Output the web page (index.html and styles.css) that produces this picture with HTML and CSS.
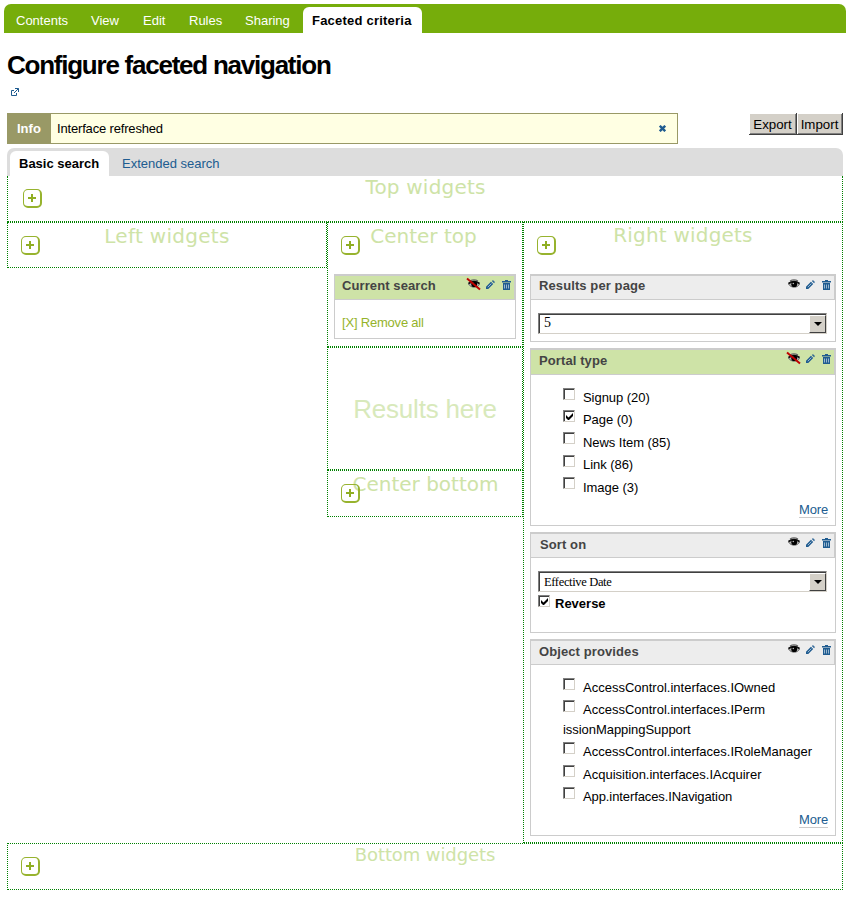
FILE: index.html
```html
<!DOCTYPE html>
<html lang="en">
<head>
<meta charset="utf-8">
<title>Configure faceted navigation</title>
<link rel="stylesheet" href="styles.css">
</head>
<body>
<svg class="defs" width="0" height="0">
  <symbol id="eye" viewBox="0 0 12 10">
    <path d="M.5 5C2 1.500 10 1.500 11.500 5C10 9 3 9.500 .5 5z" fill="#bbb" stroke="#666"/>
    <path d="M2 2Q6 -.2 10 2" fill="none" stroke="#666" stroke-width="1.200"/>
    <path d="M.5 4.500Q6 .8 11.500 4.500" fill="none" stroke="#111" stroke-width="1.600"/>
    <circle cx="6.200" cy="5.200" r="2.900" fill="#000"/><circle cx="5.300" cy="4.500" r=".8" fill="#bbb"/>
  </symbol>
  <symbol id="pencil" viewBox="0 0 10 10">
    <path d="M0 10V7.500L5.500 2L8 4.500L2.500 10zM6.500 1L8 0L8.500 1.500L10 2L9 3.500z" fill="#205c90"/>
    <path d="M2 8L6 4" stroke="#b9cee0" stroke-width=".9"/>
  </symbol>
  <symbol id="trash" viewBox="0 0 9 10">
    <path d="M3 0H6V1H9V2.500H0V1H3zM1 3H8V10H1z" fill="#205c90"/>
    <path d="M2.500 4.500V8.500M4.500 4.500V8.500M6.500 4.500V8.500" stroke="#b9cee0" stroke-width=".8"/>
  </symbol>
</svg>
<nav class="tabs">
  <a>Contents</a><a>View</a><a>Edit</a><a>Rules</a><a>Sharing</a><a class="selected">Faceted criteria</a>
</nav>
<main>
  <h1>Configure faceted navigation</h1>
  <svg class="external" viewBox="0 0 8 8" width="8" height="8"><path d="M3 2.500H.5V7.500H5.500V5M4 .5H7.500V4M7.500 .5L3 5" fill="none" stroke="#205c90"/></svg>
  <div class="status-row">
    <div class="message"><b>Info</b><span>Interface refreshed</span>
      <svg class="close" viewBox="0 0 7 7" width="7" height="7"><path d="M.8 .8L6.200 6.200M6.200 .8L.8 6.200" stroke="#205c90" stroke-width="2.400"/></svg>
    </div>
    <div class="buttons"><button class="export">Export</button><button>Import</button></div>
  </div>
  <div class="formtabs"><a class="selected">Basic search</a><a>Extended search</a></div>
  <section class="zone top"><i class="add"></i><h2>Top widgets</h2></section>
  <div class="columns">
    <section class="zone left"><i class="add"></i><h2>Left widgets</h2></section>
    <div class="center">
      <section class="zone center-top"><i class="add"></i><h2>Center top</h2>
        <article class="widget current">
          <header class="hidden-widget"><h3>Current search</h3><div class="icons"><span class="eye off"><svg><use href="#eye"/></svg></span><svg class="pencil"><use href="#pencil"/></svg><svg class="trash"><use href="#trash"/></svg></div></header>
          <a class="remove">[X] Remove all</a>
        </article>
      </section>
      <section class="zone results">Results here</section>
      <section class="zone center-bottom"><i class="add"></i><h2>Center bottom</h2></section>
    </div>
    <section class="zone right"><i class="add"></i><h2>Right widgets</h2>
      <article class="widget per-page">
        <header><h3>Results per page</h3><div class="icons"><span class="eye"><svg><use href="#eye"/></svg></span><svg class="pencil"><use href="#pencil"/></svg><svg class="trash"><use href="#trash"/></svg></div></header>
        <div class="select"><span class="five">5</span><i></i></div>
      </article>
      <article class="widget portal">
        <header class="hidden-widget"><h3>Portal type</h3><div class="icons"><span class="eye off"><svg><use href="#eye"/></svg></span><svg class="pencil"><use href="#pencil"/></svg><svg class="trash"><use href="#trash"/></svg></div></header>
        <ul>
          <li><i class="check"></i><span>Signup (20)</span></li>
          <li><i class="check"><svg viewBox="0 0 7 7"><path d="M0 2V5L2 7H3L7 3V0L2.500 4.500z"/></svg></i><span>Page (0)</span></li>
          <li><i class="check"></i><span>News Item (85)</span></li>
          <li><i class="check"></i><span>Link (86)</span></li>
          <li><i class="check"></i><span>Image (3)</span></li>
        </ul>
        <a class="more">More</a>
      </article>
      <article class="widget sort">
        <header><h3>Sort on</h3><div class="icons"><span class="eye"><svg><use href="#eye"/></svg></span><svg class="pencil"><use href="#pencil"/></svg><svg class="trash"><use href="#trash"/></svg></div></header>
        <div class="select"><span>Effective Date</span><i></i></div>
        <div class="reverse"><i class="check"><svg viewBox="0 0 7 7"><path d="M0 2V5L2 7H3L7 3V0L2.500 4.500z"/></svg></i><b>Reverse</b></div>
      </article>
      <article class="widget provides">
        <header><h3>Object provides</h3><div class="icons"><span class="eye"><svg><use href="#eye"/></svg></span><svg class="pencil"><use href="#pencil"/></svg><svg class="trash"><use href="#trash"/></svg></div></header>
        <ul>
          <li><i class="check"></i><span>AccessControl.interfaces.IOwned</span></li>
          <li class="wrapped"><i class="check"></i><span>AccessControl.interfaces.IPerm</span><span class="rest">issionMappingSupport</span></li>
          <li><i class="check"></i><span>AccessControl.interfaces.IRoleManager</span></li>
          <li><i class="check"></i><span>Acquisition.interfaces.IAcquirer</span></li>
          <li><i class="check"></i><span class="tight">App.interfaces.INavigation</span></li>
        </ul>
        <a class="more">More</a>
      </article>
    </section>
  </div>
  <section class="zone bottom"><i class="add"></i><h2>Bottom widgets</h2></section>
</main>
</body>
</html>
```
FILE: styles.css
```css
* { box-sizing: border-box; }
body { margin: 0; background: #fff; color: #000; font: 13px/18px "Liberation Sans", Arial, sans-serif; }
svg { display: block; }
.defs { position: absolute; }
h1, h2, h3, ul { margin: 0; padding: 0; font-weight: normal; }

.tabs { display: flex; align-items: flex-end; height: 29px; margin: 4px 4px 0; background: #76ad0b; border-radius: 7px 7px 0 0; color: #fff; white-space: nowrap; }
.tabs a { height: 26px; line-height: 27px; }
.tabs a:nth-child(1) { padding-left: 12px; width: 87px; }
.tabs a:nth-child(2) { width: 52px; }
.tabs a:nth-child(3) { width: 46px; }
.tabs a:nth-child(4) { width: 56px; }
.tabs a:nth-child(5) { width: 58px; }
.tabs .selected { width: 119px; padding-left: 9px; background: #fff; color: #000; font-weight: bold; letter-spacing: .22px; border-radius: 6px 6px 0 0; }

main { width: 836px; margin-left: 7px; }
h1 { height: 55px; padding-top: 17px; font-size: 26px; line-height: 30px; font-weight: bold; letter-spacing: -1.24px; white-space: nowrap; }
.external { margin-left: 4px; }
.status-row { display: flex; justify-content: space-between; margin-top: 17px; height: 35px; }
.message { display: flex; width: 671px; height: 31px; border: 1px solid #999966; background: #ffffe3; line-height: 29px; }
.message b { width: 43px; padding-left: 9px; background: #999966; color: #fff; }
.message span { flex: 1; padding-left: 6px; letter-spacing: -.17px; }
.close { margin: 11px 11px 0 0; }
.buttons { display: flex; }
button { width: 46px; height: 22px; margin: 0; padding: 0; border: 0; border-bottom: 1px solid #404040; border-right: 1px solid #404040; background: #d4d0c8; box-shadow: inset 1px 1px #fff, inset -1px -1px #808080; font: 13.3px/23px "Liberation Sans", Arial, sans-serif; color: #000; }
.export { width: 48px; }

.formtabs { display: flex; align-items: flex-end; height: 28px; padding-left: 3px; background: #ddd; border-radius: 7px 7px 0 0; color: #205c90; }
.formtabs a { height: 25px; line-height: 25px; padding-left: 13px; }
.formtabs .selected { width: 99px; padding-left: 9px; background: #fff; color: #000; font-weight: bold; border-radius: 6px 6px 0 0; }

.zone { position: relative; border: 1px dotted #008000; }
.add { position: absolute; left: 13px; top: 13px; width: 19px; height: 19px; border: 1px solid #97b32e; border-right-width: 2px; border-bottom-width: 2px; border-radius: 5px; background: linear-gradient(#8fae22, #8fae22) 4px 7px / 8px 2px no-repeat, linear-gradient(#8fae22, #8fae22) 7px 4px / 2px 8px no-repeat; }
.zone h2 { color: #cee3a7; font: 20px/24px "DejaVu Sans", sans-serif; letter-spacing: .2px; text-align: center; white-space: nowrap; }
.top { height: 46px; border-top: 0; }
.zone.top h2 { line-height: 22px; padding-left: 1px; }
.top .add { left: 15px; }
.columns { display: grid; grid-template-columns: 320px 196px 320px; align-items: start; height: 621px; }
.left { height: 46px; }
.zone.left h2 { line-height: 26px; letter-spacing: .3px; }
.center-top { height: 125px; }
.zone.center-top h2 { height: 51px; line-height: 26px; letter-spacing: 0; padding-right: 3px; }
.zone.right h2 { height: 51px; line-height: 24px; }
.results { height: 123px; color: #d8e9bb; font-size: 26px; letter-spacing: -.2px; line-height: 122px; text-align: center; }
.center-bottom { height: 47px; }
.zone.center-bottom h2 { line-height: 26px; letter-spacing: 0; padding-left: 1px; }
.center-bottom .add { z-index: 1; }
.right { height: 621px; }
.bottom { height: 47px; }
.zone.bottom h2 { font-size: 18px; line-height: 22px; letter-spacing: -.1px; }

.widget { margin: 0 6px 6px; border: 1px solid #ccc; }
.widget header { display: flex; justify-content: space-between; height: 25px; padding-left: 8px; border: solid #ccc; border-width: 1px 1px 1px 0; background: #ededed; }
.portal header { height: 26px; }
.widget .hidden-widget { background: #cee3a7; }
.widget h3 { color: #444; font: bold 13px/19px "Liberation Sans", Arial, sans-serif; letter-spacing: .1px; }
.current h3 { margin-left: -1px; }
.portal h3, .sort h3, .provides h3 { line-height: 21px; }
.sort h3 { margin-left: 1px; }
.icons { display: flex; padding: 3px 3px 0 0; }
.eye { position: relative; width: 14px; height: 10px; margin-right: 4px; }
.eye svg { width: 12px; height: 10px; }
.off::after { content: ""; position: absolute; left: -3px; top: 4px; width: 17px; height: 2px; background: #c00000; transform: rotate(40deg); }
.pencil { width: 9px; height: 9px; margin: 1px 7px 0 0; }
.trash { width: 9px; height: 10px; margin-top: 1px; }
.current { height: 65px; }
.remove { display: block; margin: 14px 0 0 7px; color: #95b32a; letter-spacing: -.2px; }
.per-page { height: 68px; }
.portal { height: 178px; }
.sort { height: 101px; }
.provides { height: 197px; }
.select { display: flex; justify-content: space-between; width: 289px; height: 21px; margin: 13px 0 0 7px; border: 1px solid #d4d0c8; border-top: 1px solid #808080; border-left: 1px solid #808080; box-shadow: inset 1px 1px #404040; font: 12.5px/20px "Liberation Serif", serif; }
.select span { padding-left: 5px; letter-spacing: -.35px; }
.select .five { font-size: 14px; line-height: 18px; }
.select i { width: 17px; margin: 1px 0 0; border: 1px solid #fff; border-right-color: #404040; border-bottom-color: #404040; background: #d4d0c8; }
.select i::before { content: ""; display: block; margin: 6px 0 0 4px; width: 0; border: 4px solid transparent; border-top-color: #000; border-bottom: 0; }
.check { display: block; flex: none; width: 12px; height: 12px; border: 1px solid #d4d0c8; border-top-color: #808080; border-left-color: #808080; box-shadow: inset 1px 1px #404040; }
.check svg { width: 7px; height: 7px; margin: 2px; }
ul { margin: 12px 0 0 32px; list-style: none; height: 112px; }
.portal ul { height: 111px; }
li { display: flex; flex-wrap: wrap; height: 22.4px; }
li .check { margin-top: 1px; }
li span { margin: 2px 0 0 8px; width: 230px; line-height: 18px; }
.portal li span { letter-spacing: -.05px; }
.wrapped { height: 42px; }
.wrapped .rest { margin: -1px 0 0; letter-spacing: -.05px; }
.tight { letter-spacing: -.1px; }
.provides ul { height: 131px; }
.portal li .check { margin-top: .5px; }
.more { display: block; width: 29px; height: 17px; margin: 3px 7px 0 auto; border-bottom: 1px solid #ccc; color: #205c90; line-height: 18px; letter-spacing: -.1px; }
.reverse { display: flex; margin-top: 3px; padding-left: 7px; }
.reverse b { margin-left: 5px; line-height: 18px; }
```
